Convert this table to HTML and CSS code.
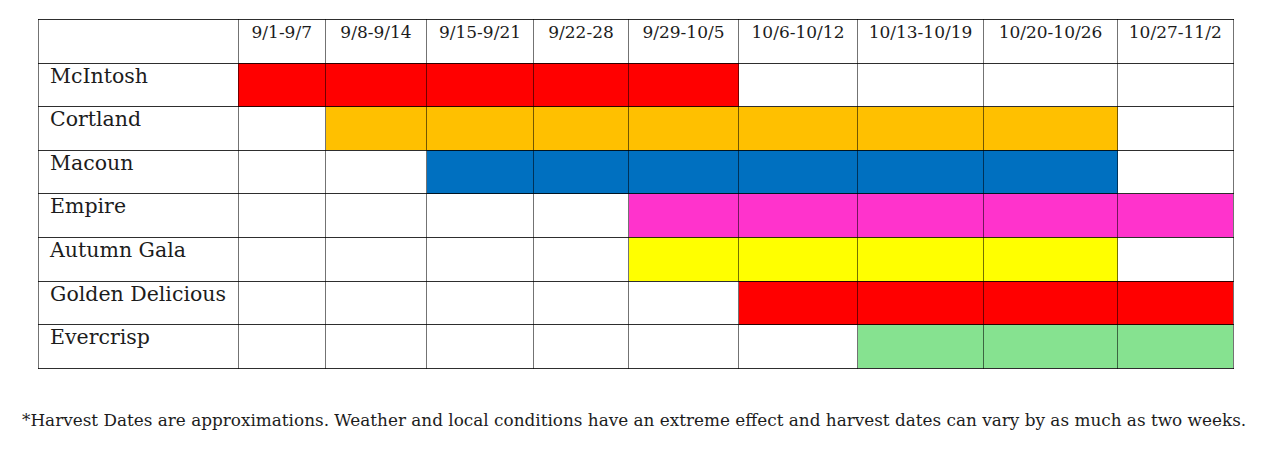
FILE: index.html
```html
<!DOCTYPE html>
<html>
<head>
<meta charset="utf-8">
<link rel="stylesheet" href="styles.css">
</head>
<body>
<table class="harvest">
  <colgroup>
    <col class="c-name"><col class="c1"><col class="c2"><col class="c3"><col class="c4"><col class="c5"><col class="c6"><col class="c7"><col class="c8"><col class="c9">
  </colgroup>
  <tr class="head">
    <td></td><td>9/1-9/7</td><td>9/8-9/14</td><td>9/15-9/21</td><td>9/22-28</td><td>9/29-10/5</td><td>10/6-10/12</td><td>10/13-10/19</td><td>10/20-10/26</td><td>10/27-11/2</td>
  </tr>
  <tr>
    <td class="name">McIntosh</td><td class="red"></td><td class="red"></td><td class="red"></td><td class="red"></td><td class="red"></td><td></td><td></td><td></td><td></td>
  </tr>
  <tr>
    <td class="name">Cortland</td><td></td><td class="orange"></td><td class="orange"></td><td class="orange"></td><td class="orange"></td><td class="orange"></td><td class="orange"></td><td class="orange"></td><td></td>
  </tr>
  <tr>
    <td class="name">Macoun</td><td></td><td></td><td class="blue"></td><td class="blue"></td><td class="blue"></td><td class="blue"></td><td class="blue"></td><td class="blue"></td><td></td>
  </tr>
  <tr>
    <td class="name">Empire</td><td></td><td></td><td></td><td></td><td class="pink"></td><td class="pink"></td><td class="pink"></td><td class="pink"></td><td class="pink"></td>
  </tr>
  <tr>
    <td class="name">Autumn Gala</td><td></td><td></td><td></td><td></td><td class="yellow"></td><td class="yellow"></td><td class="yellow"></td><td class="yellow"></td><td></td>
  </tr>
  <tr>
    <td class="name">Golden Delicious</td><td></td><td></td><td></td><td></td><td></td><td class="red"></td><td class="red"></td><td class="red"></td><td class="red"></td>
  </tr>
  <tr>
    <td class="name">Evercrisp</td><td></td><td></td><td></td><td></td><td></td><td></td><td class="green"></td><td class="green"></td><td class="green"></td>
  </tr>
</table>
<p class="note">*Harvest Dates are approximations. Weather and local conditions have an extreme effect and harvest dates can vary by as much as two weeks.</p>
</body>
</html>
```

FILE: styles.css
```css
html, body {
  margin: 0;
  padding: 0;
  background: #ffffff;
}

body {
  font-family: "DejaVu Serif", "Liberation Serif", serif;
  color: #1c1c1c;
}

.harvest {
  border-collapse: collapse;
  table-layout: fixed;
  width: 1195px;
  margin: 19px 0 0 38px;
  border: 1px solid #555;
}

.c-name { width: 199.5px; }
.c1 { width: 87.5px; }
.c2 { width: 101px; }
.c3 { width: 107px; }
.c4 { width: 95px; }
.c5 { width: 110px; }
.c6 { width: 119px; }
.c7 { width: 126px; }
.c8 { width: 134px; }
.c9 { width: 115.5px; }

.harvest tr {
  height: 43.6px;
}

.harvest td {
  border-top: 1px solid rgba(0, 0, 0, 0.82);
  border-bottom: 1px solid rgba(0, 0, 0, 0.82);
  border-left: 1px solid rgba(0, 0, 0, 0.55);
  border-right: 1px solid rgba(0, 0, 0, 0.55);
  padding: 1px 0 0 0;
  vertical-align: top;
  font-size: 17px;
  line-height: 21px;
}

.head td {
  text-align: center;
  font-size: 17px;
  padding-top: 2px;
}

.harvest td.name {
  padding-left: 11px;
  font-size: 20.5px;
  line-height: 23px;
}

.red { background: #ff0000; }
.orange { background: #ffc000; }
.blue { background: #0070c0; }
.pink { background: #ff33cc; }
.yellow { background: #ffff00; }
.green { background: #86e290; }

.note {
  margin: 41px 0 0 22px;
  font-size: 16.85px;
  line-height: 20px;
  white-space: nowrap;
}
```
